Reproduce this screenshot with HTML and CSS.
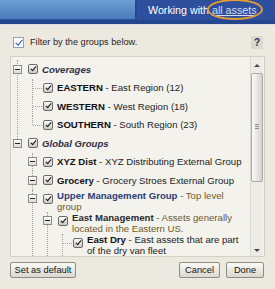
FILE: index.html
```html
<!DOCTYPE html>
<html lang="en">
<head>
  <meta charset="UTF-8">
  <title>Filter by groups</title>
  <link rel="stylesheet" href="styles.css">
</head>
<body>

  <!-- top bar -->
  <div class="topbar">
    <div class="tab"></div>
    <div class="working">Working with <a class="assets">all assets</a></div>
  </div>

  <div class="dialog">
    <div class="filter-row">
      <span class="check-blue"></span>
      <span class="filter-label">Filter by the groups below.</span>
      <span class="help">?</span>
    </div>

    <!-- group tree -->
    <div class="panel">
      <div class="tree-scroll">
        <ul class="tree">
          <li>
            <div class="row"><span class="exp"></span><span class="cb"></span><span class="label cat">Coverages</span></div>
            <ul>
              <li class="leaf"><div class="row"><span class="exp"></span><span class="cb"></span><span class="label"><b>EASTERN</b> - East Region (12)</span></div></li>
              <li class="leaf"><div class="row"><span class="exp"></span><span class="cb"></span><span class="label"><b>WESTERN</b> - West Region (18)</span></div></li>
              <li class="leaf"><div class="row"><span class="exp"></span><span class="cb"></span><span class="label"><b>SOUTHERN</b> - South Region (23)</span></div></li>
            </ul>
          </li>
          <li>
            <div class="row"><span class="exp"></span><span class="cb"></span><span class="label cat">Global Groups</span></div>
            <ul>
              <li>
                <div class="row"><span class="exp"></span><span class="cb"></span><span class="label"><b>XYZ Dist</b> - XYZ Distributing External Group</span></div>
              </li>
              <li>
                <div class="row"><span class="exp"></span><span class="cb"></span><span class="label"><b>Grocery</b> - Grocery Stroes External Group</span></div>
              </li>
              <li class="more">
                <div class="row"><span class="exp"></span><span class="cb"></span><span class="label upper"><b class="navy">Upper Management Group</b> - Top level group</span></div>
                <ul>
                  <li class="more">
                    <div class="row"><span class="exp"></span><span class="cb"></span><span class="label upper"><b>East Management</b> - Assets generally located in the Eastern US.</span></div>
                    <ul>
                      <li class="leaf more"><div class="row"><span class="exp"></span><span class="cb"></span><span class="label"><b>East Dry</b> - East assets that are part of the dry van fleet</span></div></li>
                    </ul>
                  </li>
                </ul>
              </li>
            </ul>
          </li>
        </ul>
      </div>
      <div class="scrollbar">
        <div class="sb-up"></div>
        <div class="sb-thumb"><span class="grip"></span></div>
        <div class="sb-track"></div>
        <div class="sb-down"></div>
      </div>
    </div>

    <div class="actions">
      <button class="btn btn-default">Set as default</button>
      <button class="btn btn-cancel">Cancel</button>
      <button class="btn btn-done">Done</button>
    </div>
  </div>

</body>
</html>
```

FILE: styles.css
```css
/* base */
body {
  margin: 0;
  width: 275px;
  height: 289px;
  overflow: hidden;
  font-family: "Liberation Sans", Arial, sans-serif;
  background: #ece9e0;
  color: #222;
}

/* top bar */
.topbar {
  display: flex;
  height: 20px;
  background: #2d4f9d;
  border-bottom: 4px solid #24468f;
  box-shadow: 0 1px 0 #d9dde4;
}
.tab {
  width: 135px;
  height: 19px;
  background: linear-gradient(#6e9ed3, #4a7cbd);
  border-right: 2px solid #24468f;
}
.working {
  flex: 1;
  color: #fff;
  font-size: 10.7px;
  line-height: 20px;
  padding-left: 11px;
}
.assets {
  position: relative;
  color: #d3ddf7;
  text-decoration: underline;
}
.assets::after {
  content: '';
  position: absolute;
  left: -5px;
  right: -6px;
  top: -5px;
  bottom: -4px;
  border: 2px solid #e39a35;
  border-radius: 50%;
}

/* dialog */
.dialog {
  padding: 0 10px;
}
.filter-row {
  display: flex;
  align-items: center;
  height: 14px;
  margin-top: 11px;
  font-size: 9.2px;
}
.check-blue {
  position: relative;
  width: 11px;
  height: 11px;
  box-sizing: border-box;
  margin-left: 3px;
  border: 1px solid #8aa2bf;
  background: #fff;
}
.check-blue::after {
  content: '';
  position: absolute;
  left: 3px;
  top: 0;
  width: 2.5px;
  height: 6px;
  border: solid #2d56c4;
  border-width: 0 1.5px 1.5px 0;
  transform: rotate(38deg);
}
.filter-label {
  margin-left: 6px;
  flex: 1;
  color: #1e1e1e;
}
.help {
  width: 12px;
  height: 13px;
  margin-right: 2px;
  background: #dcd8ce;
  font-size: 10px;
  font-weight: bold;
  line-height: 13px;
  text-align: center;
  color: #1f2f55;
}

/* tree panel */
.panel {
  display: flex;
  height: 199px;
  margin-top: 7px;
  border: 1px solid #d4d0c6;
  background: #f4f2ed;
}
.tree-scroll {
  flex: 1;
  overflow: hidden;
  padding: 3px 0 0 2px;
}
.tree, .tree ul {
  list-style: none;
  margin: 0;
  padding: 0;
}
.tree ul {
  padding-left: 15px;
}
.tree li {
  position: relative;
}
.tree li::before {
  content: '';
  position: absolute;
  left: 4px;
  top: 0;
  bottom: 0;
  border-left: 1px dotted #a5a39c;
}
.tree li:last-child::before {
  bottom: auto;
  height: 9px;
}
.tree li.more::before {
  height: auto;
  bottom: 0;
}
.tree li.leaf::after {
  content: '';
  position: absolute;
  left: 5px;
  top: 9px;
  width: 9px;
  border-top: 1px dotted #a5a39c;
}
.row {
  display: flex;
  align-items: flex-start;
  min-height: 18.5px;
  font-size: 9.6px;
  line-height: 11px;
}
.exp {
  position: relative;
  z-index: 1;
  flex: none;
  width: 9px;
  height: 9px;
  box-sizing: border-box;
  margin: 4.75px 6px 0 0;
  border: 1px solid #8d8b86;
  background: linear-gradient(#fdfdfd, #dedcd6);
}
.exp::after {
  content: '';
  position: absolute;
  left: 1px;
  right: 1px;
  top: 3px;
  height: 1px;
  background: #222;
}
.leaf .exp {
  visibility: hidden;
}
.cb {
  position: relative;
  flex: none;
  width: 10px;
  height: 10px;
  box-sizing: border-box;
  margin: 4.25px 4px 0 0;
  border: 1px solid #6b6a66;
  border-radius: 2px;
  background: linear-gradient(#fbfbfb, #c9c8c4);
}
.cb::after {
  content: '';
  position: absolute;
  left: 2.5px;
  top: 0;
  width: 2px;
  height: 5px;
  border: solid #111;
  border-width: 0 1.5px 1.5px 0;
  transform: rotate(40deg);
}
.label {
  flex: 1;
  align-self: center;
  padding-right: 2px;
  color: #222;
}
.label b {
  color: #111;
}
.cat {
  font-weight: bold;
  font-style: italic;
  color: #2e2e46;
}
.upper {
  color: #6a5a30;
}
.upper b {
  color: #2a2a2a;
}
.upper b.navy {
  color: #2c3e76;
}

/* scrollbar */
.scrollbar {
  display: flex;
  flex-direction: column;
  width: 12px;
  margin-right: 1px;
  border-left: 1px solid #dcd9d1;
  background: #eeece6;
}
.sb-up, .sb-down {
  position: relative;
  height: 14px;
}
.sb-up::before, .sb-down::before {
  content: '';
  position: absolute;
  left: 3px;
  top: 6px;
  border: 3px solid transparent;
}
.sb-up::before {
  top: 4px;
  border-bottom-color: #444;
}
.sb-down::before {
  top: 7px;
  border-top-color: #444;
}
.sb-thumb {
  position: relative;
  height: 107px;
  margin: 2px 0 0 0;
  border: 1px solid #aaa9a4;
  border-radius: 2px;
  background: linear-gradient(90deg, #fbfbfb, #d3d2ce);
}
.grip {
  position: absolute;
  left: 3px;
  right: 3px;
  top: 50px;
  height: 5px;
  background: repeating-linear-gradient(#8c8b86 0 1px, transparent 1px 2px);
}
.sb-track {
  flex: 1;
}

/* buttons */
.actions {
  display: flex;
  gap: 6px;
  margin-top: 5px;
}
.btn {
  height: 16px;
  padding: 0;
  font-family: "Liberation Sans", Arial, sans-serif;
  font-size: 9.3px;
  color: #111;
  border: 1px solid #8f8c85;
  border-radius: 2px;
  background: linear-gradient(#fbfaf7, #dbd7ce);
}
.btn-default {
  width: 66px;
  margin-right: auto;
}
.btn-cancel {
  width: 41px;
}
.btn-done {
  width: 38px;
  margin-right: 1px;
}
```
